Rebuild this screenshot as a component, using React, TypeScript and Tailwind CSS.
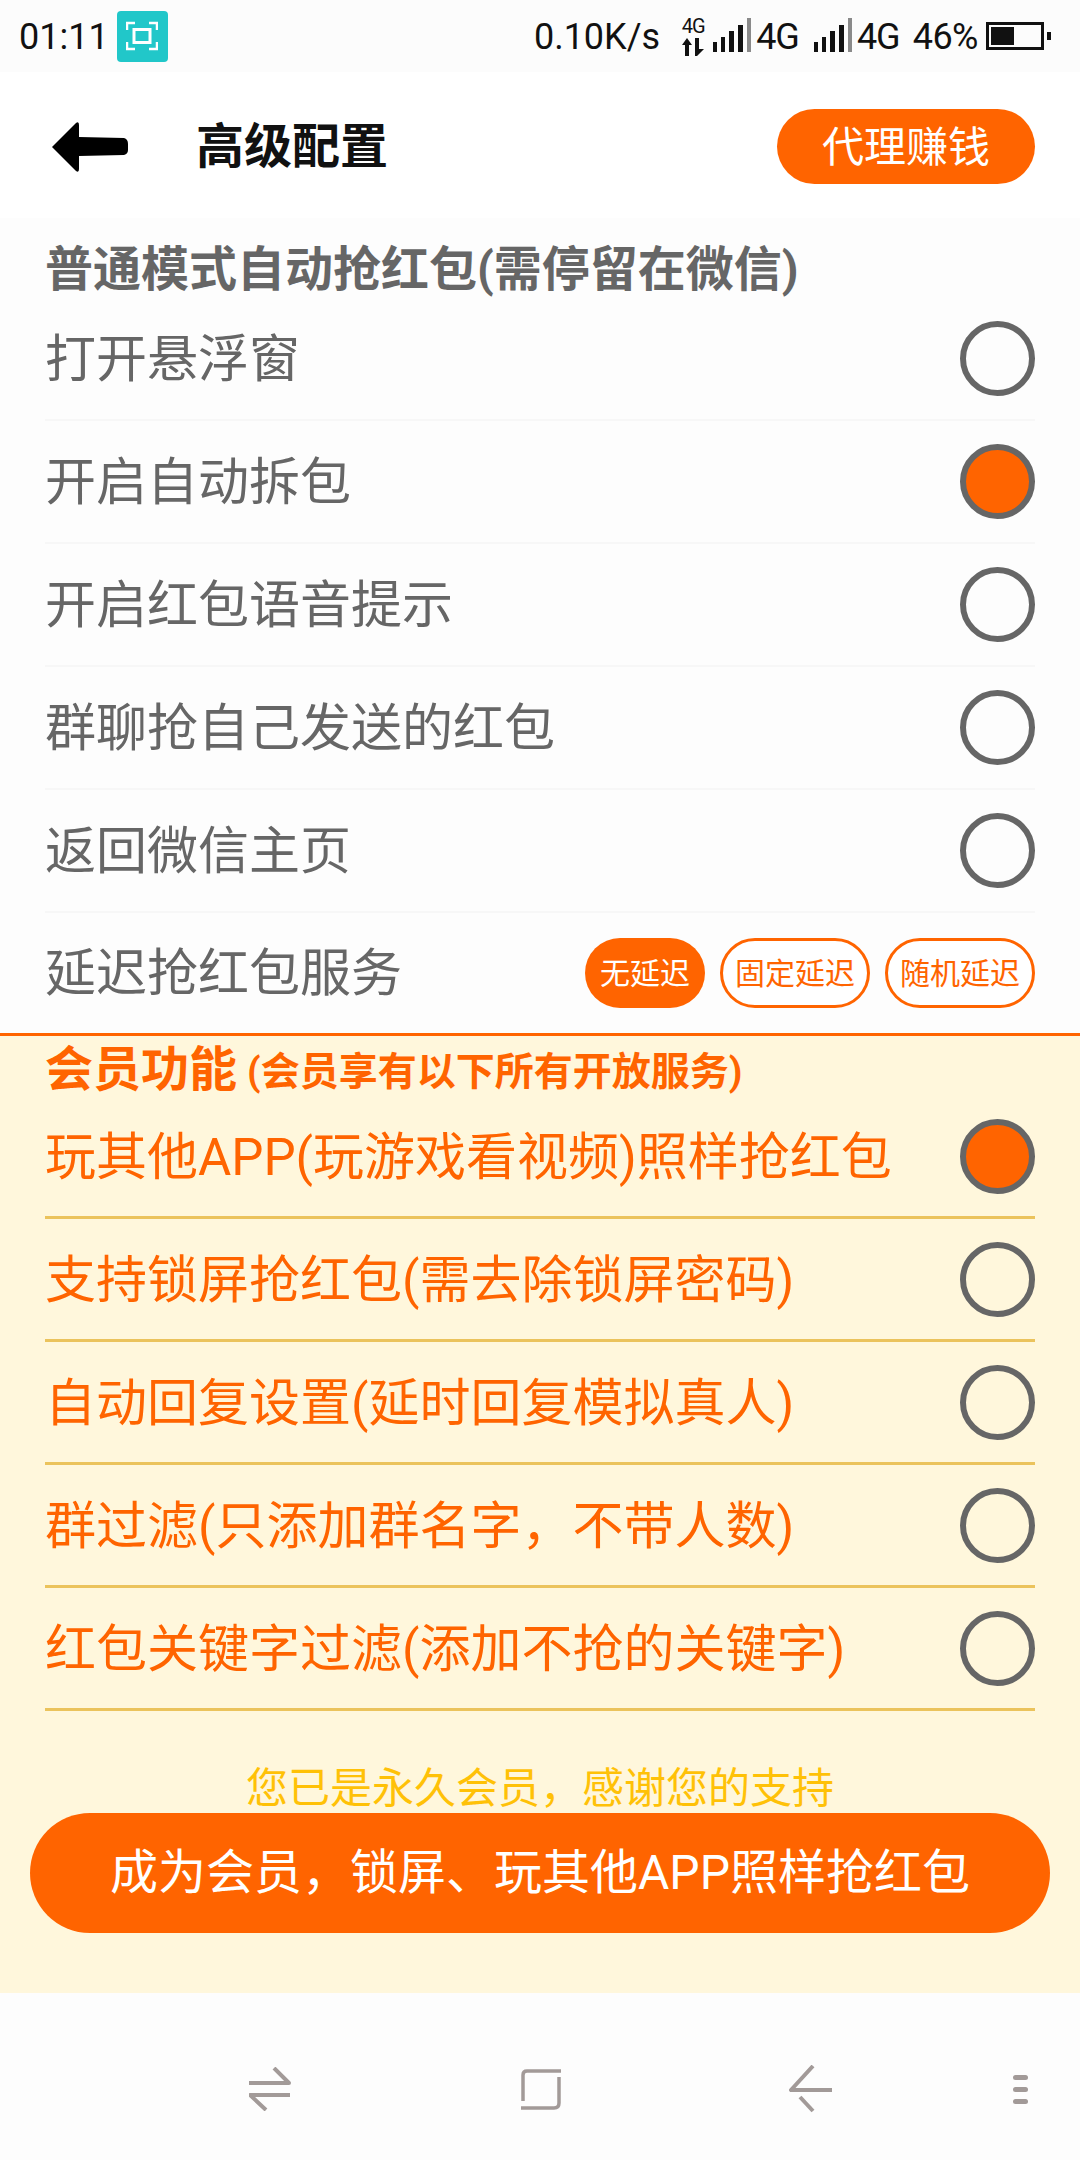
import React from "react";

function Radio({ on }: { on?: boolean }) {
  return (
    <div className={"h-[75px] w-[75px] shrink-0 rounded-full border-[6px] border-[#666666] " + (on ? "bg-[#ff6400]" : "bg-transparent")} />
  );
}

function Signal() {
  return (
    <svg width="40" height="36" viewBox="0 0 40 36" className="shrink-0">
      <rect x="0" y="24" width="4" height="10" fill="#111" />
      <rect x="8" y="19" width="4" height="15" fill="#111" />
      <rect x="16" y="13" width="5" height="21" fill="#111" />
      <rect x="25" y="7" width="5" height="27" fill="#111" />
      <rect x="34" y="0" width="4" height="34" fill="#8a8a8a" />
    </svg>
  );
}

const topRows: [string, boolean][] = [
  ["打开悬浮窗", false],
  ["开启自动拆包", true],
  ["开启红包语音提示", false],
  ["群聊抢自己发送的红包", false],
  ["返回微信主页", false],
];

const vipRows: [string, boolean][] = [
  ["玩其他APP(玩游戏看视频)照样抢红包", true],
  ["支持锁屏抢红包(需去除锁屏密码)", false],
  ["自动回复设置(延时回复模拟真人)", false],
  ["群过滤(只添加群名字，不带人数)", false],
  ["红包关键字过滤(添加不抢的关键字)", false],
];

export default function App() {
  return (
    <div
      className="flex h-[2160px] w-[1080px] flex-col overflow-hidden bg-[#fdfdfd]"
      style={{ fontFamily: 'Roboto, "Noto Sans CJK SC", sans-serif' }}
    >
      {/* Status bar */}
      <div className="flex h-[72px] shrink-0 items-center bg-[#fcfcfc] pl-[19px] pr-[28px] text-[36px] leading-none text-[#111]">
        <span className="pt-[2px]">01:11</span>
        <div className="ml-[8px] flex h-[51px] w-[51px] items-center justify-center rounded-[4px] bg-[#21c7c9]">
          <svg width="32" height="30" viewBox="0 0 32 30" fill="none" stroke="#fff" strokeWidth="2.5">
            <path d="M1 9V2h8M23 2h8v7M31 21v7h-8M9 28H1v-7" />
            <rect x="8" y="8.5" width="16" height="13" strokeWidth="3" />
          </svg>
        </div>
        <span className="ml-auto pt-[2px]">0.10K/s</span>
        <div className="ml-[20px] flex w-[26px] flex-col items-center">
          <span className="text-[20px] leading-[18px] tracking-[-1px]">4G</span>
          <svg width="24" height="18" viewBox="0 0 24 18" className="mt-[3px]">
            <path d="M6 0L11 7H8V18H4V7H1ZM14 0H18V11H23L16 18H14Z" fill="#111" />
          </svg>
        </div>
        <div className="ml-[7px]">
          <Signal />
        </div>
        <span className="ml-[3px] pt-[2px] tracking-[-1px]">4G</span>
        <div className="ml-[15px]">
          <Signal />
        </div>
        <span className="ml-[3px] pt-[2px] tracking-[-1px]">4G</span>
        <span className="ml-[13px] pt-[2px] tracking-[-0.5px]">46%</span>
        <svg width="66" height="28" viewBox="0 0 66 28" className="ml-[8px] shrink-0">
          <rect x="1.5" y="1.5" width="55" height="25" fill="none" stroke="#111" strokeWidth="3" />
          <rect x="5" y="5" width="23" height="18" fill="#111" />
          <rect x="61" y="10" width="4" height="8" fill="#111" />
        </svg>
      </div>

      {/* Header */}
      <div className="flex h-[146px] shrink-0 items-center bg-white pl-[52px] pr-[45px]">
        <svg width="77" height="50" viewBox="0 0 77 50" className="mt-[3px] shrink-0">
          <path
            d="M0 25L24 1Q27 -1 27 3V15L72 16Q76 17 76 22V28Q76 32 72 33L27 34V47Q27 51 24 49Z"
            fill="#000"
          />
        </svg>
        <span className="ml-[67px] pt-[3px] text-[48px] font-bold leading-none text-[#111]">高级配置</span>
        <div className="ml-auto mt-[2px] flex h-[75px] w-[258px] items-center justify-center rounded-full bg-[#ff6400] pt-[3px] text-[42px] text-white">
          代理赚钱
        </div>
      </div>

      {/* Normal mode */}
      <div className="shrink-0 bg-[#fdfdfd] px-[45px]">
        <div className="flex h-[80px] items-end text-[48px] font-bold leading-[56px] text-[#666666]">
          普通模式自动抢红包(需停留在微信)
        </div>
        <div className="flex flex-col">
          {topRows.map(([label, on]) => (
            <div key={label} className="border-b-2 border-[#f7f7f7]">
              <div className="flex h-[121px] items-center justify-between text-[51px] text-[#666666]">
                <span className="pt-[3px]">{label}</span>
                <Radio on={on} />
              </div>
            </div>
          ))}
          <div className="flex h-[120px] items-center justify-between text-[51px] text-[#666666]">
            <span className="pt-[3px]">延迟抢红包服务</span>
            <div className="flex items-center gap-[15px] text-[30px]">
              <div className="flex h-[70px] w-[120px] items-center justify-center rounded-full bg-[#ff6400] text-white">
                无延迟
              </div>
              <div className="flex h-[70px] w-[150px] items-center justify-center rounded-full border-[3px] border-[#ff6400] bg-white text-[#ff6400]">
                固定延迟
              </div>
              <div className="flex h-[70px] w-[150px] items-center justify-center rounded-full border-[3px] border-[#ff6400] bg-white text-[#ff6400]">
                随机延迟
              </div>
            </div>
          </div>
        </div>
      </div>

      {/* Member section */}
      <div className="flex h-[960px] shrink-0 flex-col border-t-[3px] border-[#ff6400] bg-[#fff7dc]">
        <div className="px-[45px]">
          <div className="flex h-[60px] items-end pt-[4px] font-bold text-[#ff6400]">
            <span className="translate-y-[4px] text-[48px] leading-[60px]">会员功能</span>
            <span className="ml-[10px] translate-y-[4px] text-[39px] leading-[56px]">(会员享有以下所有开放服务)</span>
          </div>
          {vipRows.map(([label, on]) => (
            <div
              key={label}
              className="flex h-[123px] items-center justify-between border-b-[3px] border-[#ebc35c] text-[51px] text-[#ff6400]"
            >
              <span className="pt-[4px]">{label}</span>
              <Radio on={on} />
            </div>
          ))}
        </div>
        <div className="mt-[51px] text-center text-[42px] leading-[54px] text-[#ffc107]">您已是永久会员，感谢您的支持</div>
        <div className="mx-[30px] mt-[-3px] flex h-[120px] items-center justify-center rounded-full bg-[#ff6400] text-[48px] text-white">
          成为会员，锁屏、玩其他APP照样抢红包
        </div>
      </div>

      {/* Nav bar */}
      <div className="flex flex-1 items-center bg-[#fdfdfd] pt-[25px]">
        <svg width="42" height="44" viewBox="0 0 42 44" fill="none" stroke="#a29a98" strokeWidth="4" className="ml-[249px] shrink-0">
          <path d="M0 16H40L25 1" strokeLinejoin="round" />
          <path d="M41 28H1L17 43" strokeLinejoin="round" />
        </svg>
        <svg width="42" height="44" viewBox="0 0 42 44" fill="none" stroke="#a29a98" strokeWidth="3.5" className="ml-[229px] shrink-0">
          <path d="M41 4H7Q3 4 3 8V34" />
          <path d="M1 41H34Q39 41 39 36V10" />
        </svg>
        <svg width="44" height="48" viewBox="0 0 44 48" fill="none" stroke="#a29a98" strokeWidth="4" className="ml-[227px] shrink-0">
          <path d="M24 1L2 25H43" strokeLinejoin="round" />
          <path d="M11 32L24 46" />
        </svg>
        <div className="ml-[180px] flex w-[15px] flex-col gap-[7px]">
          <div className="h-[5px] rounded-full bg-[#a29a98]" />
          <div className="h-[5px] rounded-full bg-[#a29a98]" />
          <div className="h-[5px] rounded-full bg-[#a29a98]" />
        </div>
      </div>
    </div>
  );
}
